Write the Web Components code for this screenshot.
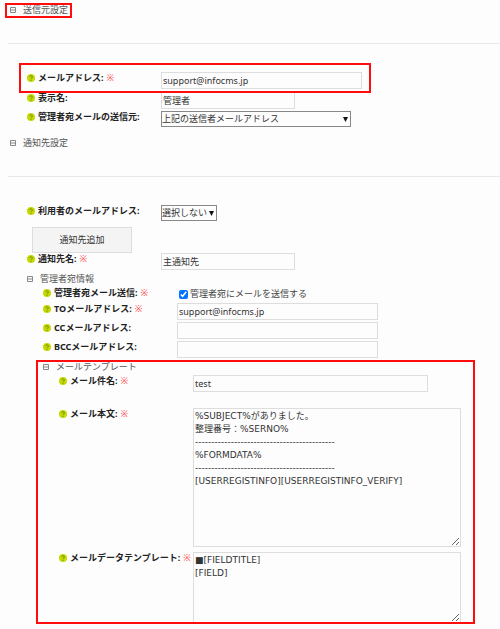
<!DOCTYPE html>
<html lang="ja">
<head>
<meta charset="utf-8">
<meta name="viewport" content="width=device-width, initial-scale=1">
<title>送信元設定</title>
<style>
  body {
    margin: 0;
    padding: 3px 0 6px 10px;
    background: #fdfdfd;
    color: #333;
    font: 9px/14px "Noto Sans", "Noto Sans CJK JP", sans-serif;
  }
</style>
</head>
<body>
<mail-settings></mail-settings>

<template id="help-icon">
  <style>
    :host { display: block; width: 8px; height: 8px; }
    svg { display: block; }
  </style>
  <svg width="8" height="8" viewBox="0 0 16 16" aria-hidden="true">
    <circle cx="8" cy="8" r="8" fill="#c3da00"/>
    <path d="M5.400 6.200a2.600 2.500 0 1 1 3.900 2.100C8.300 8.900 8 9.200 8 10.200" fill="none" stroke="#5f6f10" stroke-width="1.500"/>
    <circle cx="8" cy="12.300" r="1" fill="#5f6f10"/>
  </svg>
</template>

<template id="section-block">
  <style>
    :host { display: block; }
    .head { display: flex; }
    button {
      display: flex;
      align-items: center;
      gap: 7px;
      padding: 0;
      border: 0;
      background: none;
      color: #555;
      font: inherit;
      cursor: pointer;
    }
    svg { display: block; }
    hr {
      height: 1px;
      margin: 26px 0 28px -2px;
      border: 0;
      background: #e8e8e8;
    }
    .body {
      display: flex;
      flex-direction: column;
      gap: 2px;
      padding-left: 17px;
    }
    :host([nested]) .body { padding: 1px 0 0 16px; }
    :host([nested]) hr { display: none; }
    .body[hidden] { display: none; }
  </style>
  <div class="head">
    <mark-box>
      <button type="button" aria-expanded="true">
        <svg width="6" height="6" viewBox="0 0 6 6" aria-hidden="true">
          <path d="M.5.5h5v5h-5zM1 3h4" fill="none" stroke="#888"/>
        </svg>
        <span></span>
      </button>
    </mark-box>
  </div>
  <hr>
  <div class="body"><slot></slot></div>
</template>

<template id="mark-box">
  <style>
    :host { display: block; position: relative; }
    :host([on])::after {
      content: "";
      position: absolute;
      inset: var(--mark-inset, 0);
      border: 2px solid #ff0d0d;
      pointer-events: none;
    }
  </style>
  <slot></slot>
</template>

<template id="field-row">
  <style>
    :host {
      display: grid;
      grid-template-columns: 134px minmax(0, 1fr);
      align-items: start;
    }
    .label {
      display: flex;
      align-items: center;
      gap: 3px;
      line-height: 12px;
      white-space: nowrap;
      color: #222;
    }
    .label label { font-weight: 700; }
    .req { color: #f33; }
    input, textarea, select {
      box-sizing: border-box;
      display: block;
      width: var(--field-width, 200px);
      max-width: calc(100% - 8px);
      margin: 0;
      border: 1px solid #ddd;
      border-radius: 0;
      background: #fdfdfd;
      color: #333;
      font: inherit;
      outline: none;
    }
    input[type="text"] {
      height: 17px;
      padding: 0 1px;
    }
    textarea {
      height: var(--field-height, 140px);
      padding: 1px;
      font-family: "DejaVu Sans", "Noto Sans CJK JP", sans-serif;
      line-height: 13px;
      resize: both;
    }
    .pick {
      display: grid;
      width: var(--field-width);
      max-width: calc(100% - 8px);
      align-items: center;
    }
    .pick > * { grid-area: 1 / 1; }
    .pick select {
      width: 100%;
      max-width: none;
      height: 16px;
      padding: 0;
      border-color: #888;
      appearance: none;
    }
    .pick svg {
      justify-self: end;
      margin-right: 3px;
      pointer-events: none;
    }
    .tick {
      display: flex;
      align-items: center;
      gap: 2px;
      margin-left: 2px;
      color: #444;
    }
    .tick input {
      width: 9px;
      height: 9px;
    }
  </style>
  <div class="label">
    <help-icon></help-icon>
    <label for="field"></label>
  </div>
</template>

<template id="mail-settings">
  <style>
    :host { display: block; }
    section-block[label="通知先設定"] { margin-top: 9px; }
    section-block[marked] { --mark-inset: 0 -4px -1px -5px; }
    .address {
      margin-bottom: 1px;
      --mark-inset: -9px 129px -4px -8px;
    }
    .template { --mark-inset: 0 25px -1px -7px; }
    .add {
      align-self: flex-start;
      width: 100px;
      height: 26px;
      margin: 4px 0 -2px 5px;
      padding: 0;
      border: 1px solid #ddd;
      background: #f4f4f4;
      color: #333;
      font: inherit;
    }
    .subject { margin-bottom: 14px; }
    .body-text { margin-bottom: 3px; }
  </style>
  <form>
    <section-block label="送信元設定" marked>
      <mark-box class="address" on>
        <text-row label="メールアドレス:" required value="support@infocms.jp" width="201"></text-row>
      </mark-box>
      <text-row label="表示名:" value="管理者" width="134"></text-row>
      <select-row label="管理者宛メールの送信元:" value="上記の送信者メールアドレス" width="190"></select-row>
    </section-block>
    <section-block label="通知先設定">
      <select-row label="利用者のメールアドレス:" value="選択しない" width="56"></select-row>
      <button class="add" type="button">通知先追加</button>
      <text-row label="通知先名:" required value="主通知先" width="134"></text-row>
      <section-block label="管理者宛情報" nested>
        <check-row label="管理者宛メール送信:" required value="管理者宛にメールを送信する"></check-row>
        <text-row label="TOメールアドレス:" required value="support@infocms.jp" width="201"></text-row>
        <text-row label="CCメールアドレス:" width="201"></text-row>
        <text-row label="BCCメールアドレス:" width="201"></text-row>
        <mark-box class="template" on>
          <section-block label="メールテンプレート" nested>
            <text-row class="subject" label="メール件名:" required value="test" width="235"></text-row>
            <area-row class="body-text" label="メール本文:" required width="268" height="139">%SUBJECT%がありました。
整理番号：%SERNO%
-------------------------------------------
%FORMDATA%
-------------------------------------------
[USERREGISTINFO][USERREGISTINFO_VERIFY]</area-row>
            <area-row label="メールデータテンプレート:" required width="268" height="71">■[FIELDTITLE]
[FIELD]</area-row>
          </section-block>
        </mark-box>
      </section-block>
    </section-block>
  </form>
</template>

<script>
  class BaseElement extends HTMLElement {
    constructor () {
      super()
      this.attachShadow({ mode: 'open' })
        .appendChild(document.getElementById(this.templateId).content.cloneNode(true))
    }

    get templateId () {
      return this.localName
    }
  }

  class HelpIcon extends BaseElement {}
  class MarkBox extends BaseElement {}
  class MailSettings extends BaseElement {}

  class SectionBlock extends BaseElement {
    connectedCallback () {
      const $button = this.shadowRoot.querySelector('button')
      const $body = this.shadowRoot.querySelector('.body')
      this.shadowRoot.querySelector('span').textContent = this.getAttribute('label')
      this.shadowRoot.querySelector('mark-box').toggleAttribute('on', this.hasAttribute('marked'))
      $button.addEventListener('click', () => {
        $body.hidden = !$body.hidden
        $button.setAttribute('aria-expanded', String(!$body.hidden))
      })
    }
  }

  // label on the left, the control of the subclass on the right
  class FieldRow extends BaseElement {
    get templateId () {
      return 'field-row'
    }

    connectedCallback () {
      if (this.$control) return
      const $label = this.shadowRoot.querySelector('label')
      $label.textContent = this.getAttribute('label')
      if (this.hasAttribute('required')) {
        const $req = document.createElement('span')
        $req.className = 'req'
        $req.textContent = '※'
        $label.after($req)
      }
      if (this.hasAttribute('width')) {
        this.style.setProperty('--field-width', `${this.getAttribute('width')}px`)
      }
      this.$control = this._createControl()
      this.$control.id = 'field'
      this.shadowRoot.append(this._wrapControl(this.$control))
    }

    _wrapControl ($control) {
      return $control
    }
  }

  class TextRow extends FieldRow {
    _createControl () {
      const $input = document.createElement('input')
      $input.type = 'text'
      $input.value = this.getAttribute('value') || ''
      return $input
    }
  }

  class AreaRow extends FieldRow {
    _createControl () {
      const $area = document.createElement('textarea')
      this.style.setProperty('--field-height', `${this.getAttribute('height')}px`)
      $area.value = this.textContent
      $area.spellcheck = false
      return $area
    }
  }

  class SelectRow extends FieldRow {
    _createControl () {
      const $select = document.createElement('select')
      $select.add(new Option(this.getAttribute('value')))
      return $select
    }

    _wrapControl ($control) {
      const $pick = document.createElement('div')
      $pick.className = 'pick'
      $pick.innerHTML = '<svg width="5" height="5" viewBox="0 0 5 5" aria-hidden="true"><path d="M0 0h5L2.5 5z" fill="#111"/></svg>'
      $pick.prepend($control)
      return $pick
    }
  }

  class CheckRow extends FieldRow {
    _createControl () {
      const $input = document.createElement('input')
      $input.type = 'checkbox'
      $input.checked = true
      return $input
    }

    _wrapControl ($control) {
      const $tick = document.createElement('label')
      $tick.className = 'tick'
      $tick.append($control, this.getAttribute('value'))
      return $tick
    }
  }

  window.customElements.define('help-icon', HelpIcon)
  window.customElements.define('mark-box', MarkBox)
  window.customElements.define('section-block', SectionBlock)
  window.customElements.define('text-row', TextRow)
  window.customElements.define('area-row', AreaRow)
  window.customElements.define('select-row', SelectRow)
  window.customElements.define('check-row', CheckRow)
  window.customElements.define('mail-settings', MailSettings)
</script>
</body>
</html>
